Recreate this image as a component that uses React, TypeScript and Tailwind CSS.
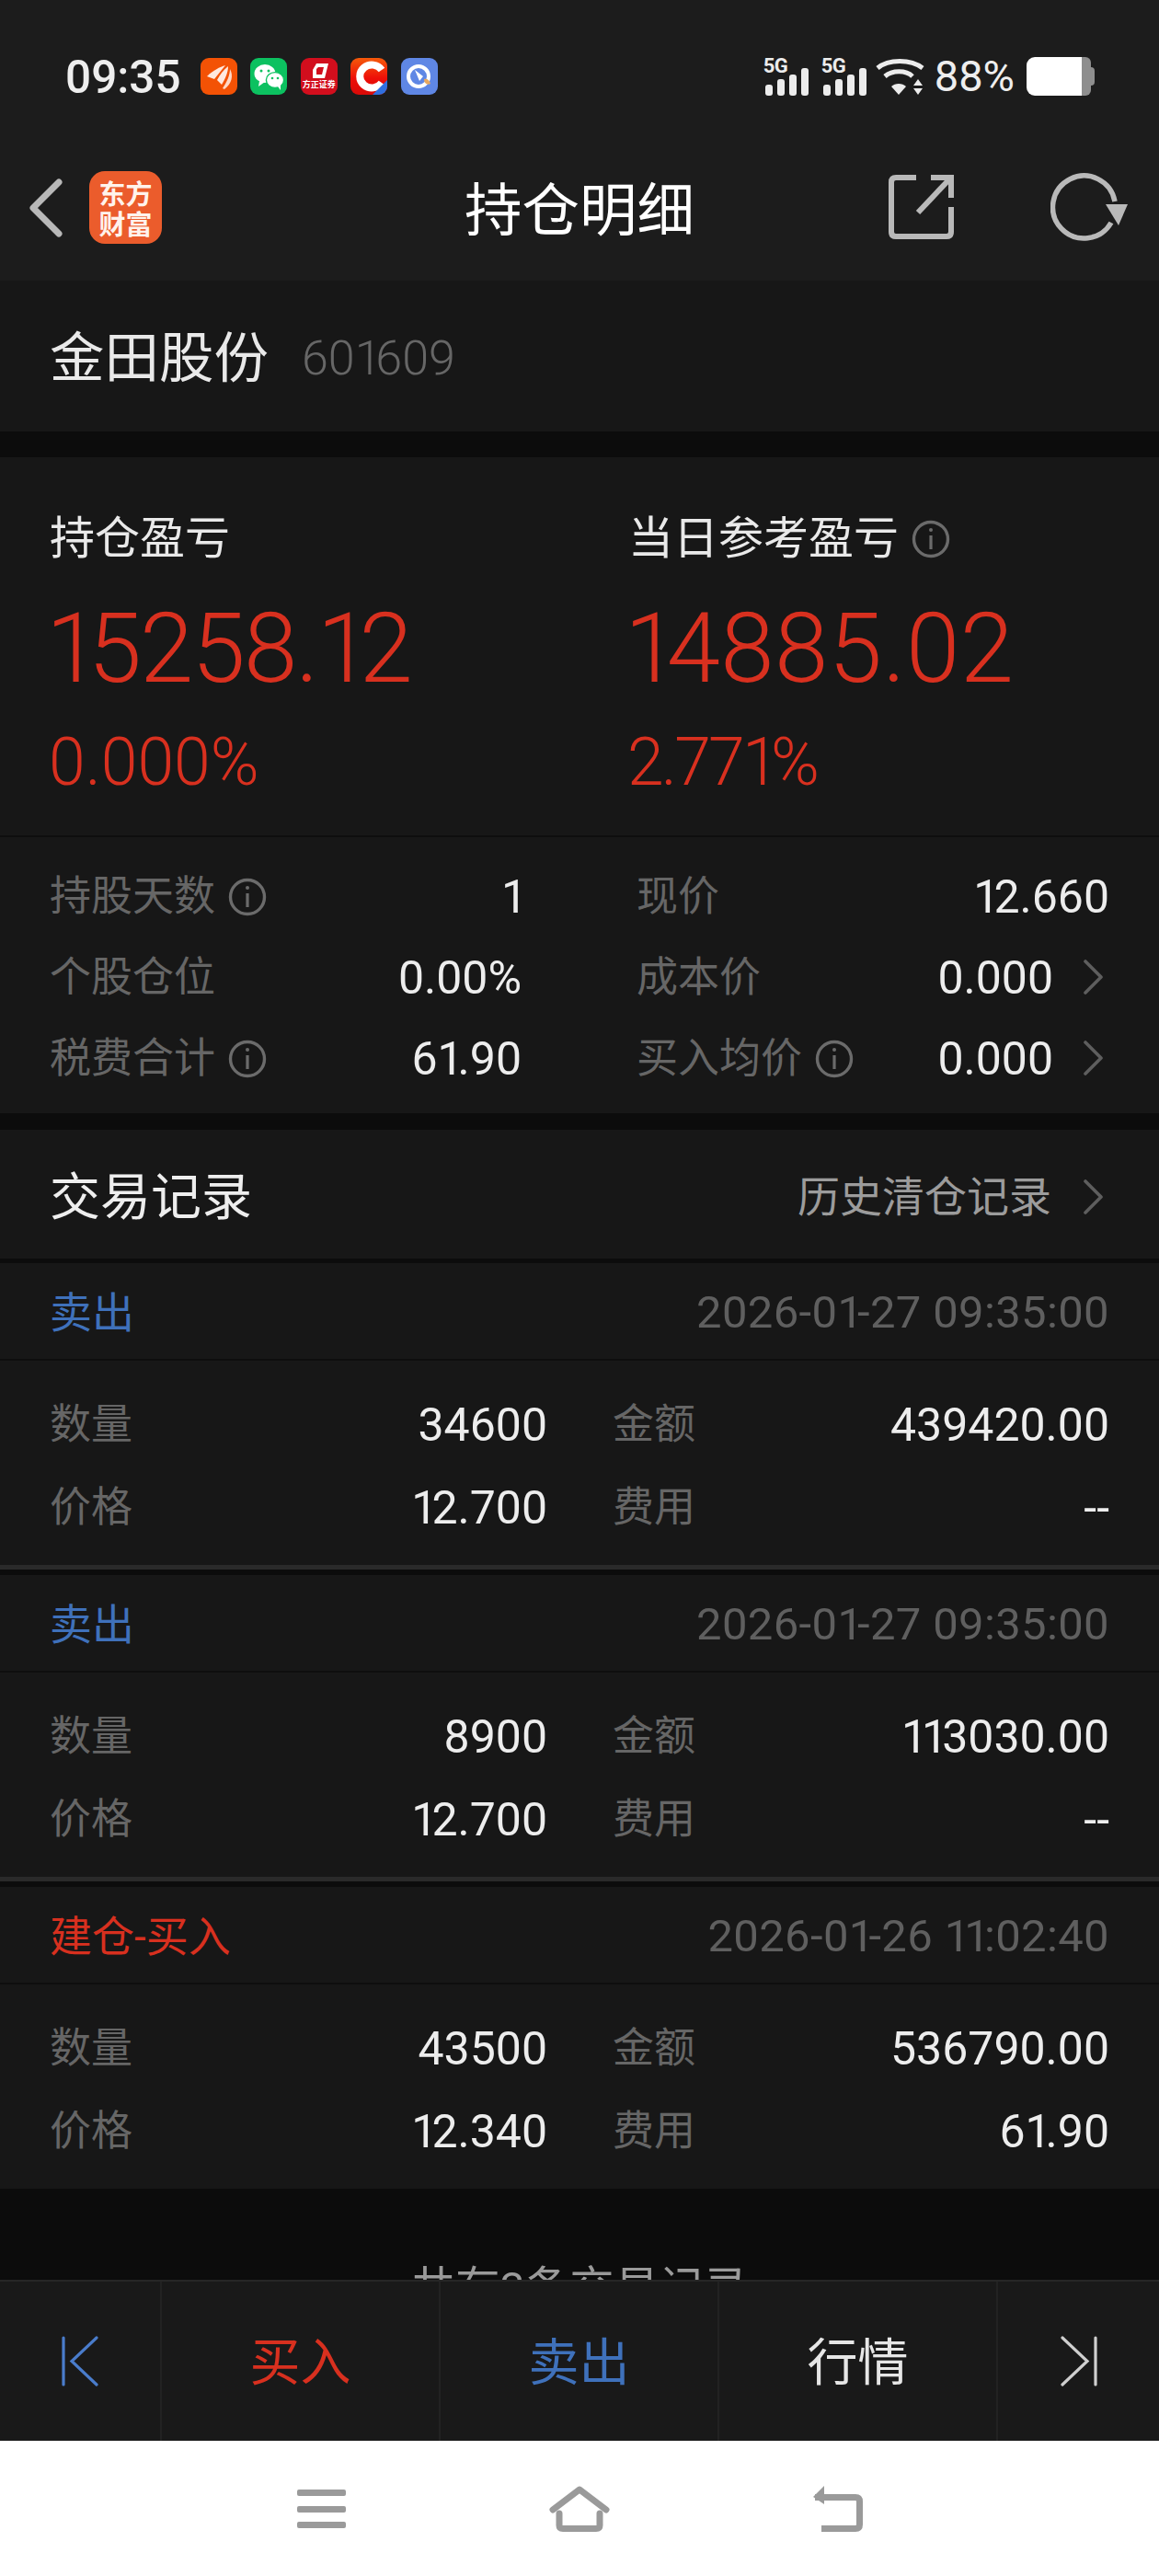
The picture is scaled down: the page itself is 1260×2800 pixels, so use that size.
import React from "react";

const FONT = "font-['Roboto','Noto_Sans_CJK_SC',sans-serif]";

function Num({ v }: { v: string }) {
  return (
    <>
      {v.split(/(1)/).filter(Boolean).map((p, i) =>
        p === "1" ? (
          <span key={i} className="tracking-[-0.12em]">1</span>
        ) : (
          <React.Fragment key={i}>{p}</React.Fragment>
        )
      )}
    </>
  );
}

function Info({ className = "" }: { className?: string }) {
  return (
    <svg viewBox="0 0 42 42" className={`w-[42px] h-[42px] shrink-0 ${className}`} fill="none" stroke="#6b6b6b" strokeWidth="3.4">
      <circle cx="21" cy="21" r="18.5" />
      <line x1="21" y1="17" x2="21" y2="32" strokeWidth="3.2" />
      <circle cx="21" cy="11" r="2" fill="#6b6b6b" stroke="none" />
    </svg>
  );
}

function Chevron({ className = "" }: { className?: string }) {
  return (
    <svg viewBox="0 0 24 38" className={`w-[24px] h-[38px] shrink-0 ${className}`} fill="none" stroke="#5e5e5e" strokeWidth="3.6" strokeLinecap="round" strokeLinejoin="round">
      <path d="M4 2 L21 19 L4 36" />
    </svg>
  );
}

function Signal() {
  return (
    <div className="relative w-[49px] h-[42px]">
      <span className="absolute left-0 top-[-3px] text-[22px] leading-[26px] font-bold text-[#ececec] font-['Roboto',sans-serif] tracking-[-0.5px]">5G</span>
      <svg viewBox="0 0 49 42" className="absolute inset-0 w-[49px] h-[42px]" fill="#ececec">
        <rect x="2" y="30" width="8" height="12" rx="3" />
        <rect x="15" y="24" width="8" height="18" rx="3" />
        <rect x="28" y="19" width="8" height="23" rx="3" />
        <rect x="41" y="12" width="8" height="30" rx="3" />
      </svg>
    </div>
  );
}

function AppIcons() {
  return (
    <div className="flex gap-[14.6px] ml-[21px] mt-[3px]">
      <svg viewBox="0 0 40 40" className="w-[40px] h-[40px]">
        <rect width="40" height="40" rx="9" fill="#f35205" />
        <path d="M7 20 C14 13 21 10 27 8 C23 13 19 18 15 23 Z" fill="#ffe9df" />
        <path d="M18 24 C21 18 25 13 30 9 C30 16 27 22 23 29 Z" fill="#ffe9df" />
        <path d="M24 33 C29 26 32 18 32 12 C36 19 34 28 26 34 Z" fill="#ffd9c6" />
      </svg>
      <svg viewBox="0 0 40 40" className="w-[40px] h-[40px]">
        <rect width="40" height="40" rx="9" fill="#0cc160" />
        <ellipse cx="16" cy="17" rx="11.5" ry="10" fill="#fff" />
        <path d="M10 25 L9 31 L16 26 Z" fill="#fff" />
        <ellipse cx="27" cy="24" rx="9.6" ry="8.4" fill="#fff" stroke="#0cc160" strokeWidth="1.4" />
        <path d="M30 31 L33 35 L33 29 Z" fill="#fff" />
        <circle cx="12" cy="14" r="1.5" fill="#0cc160" />
        <circle cx="20" cy="14" r="1.5" fill="#0cc160" />
        <circle cx="24" cy="22" r="1.3" fill="#0cc160" />
        <circle cx="30" cy="22" r="1.3" fill="#0cc160" />
      </svg>
      <div className="relative w-[40px] h-[40px] rounded-[9px] bg-[#d20e1d]">
        <svg viewBox="0 0 40 40" className="absolute inset-0 w-[40px] h-[40px]">
          <path d="M17 6 H30 L26 22 H13 V13 Z" fill="#fff" />
          <path d="M19 10 H25 L23 18 H17 V12 Z" fill="#d20e1d" />
        </svg>
        <span className="absolute left-0 right-0 top-[24px] text-center text-[9px] leading-[10px] font-bold text-white whitespace-nowrap">方正证券</span>
      </div>
      <div className="relative w-[40px] h-[40px] rounded-[9px] overflow-hidden bg-[linear-gradient(180deg,#f55a0a_0%,#ee0f08_55%,#d80a08_100%)]">
        <svg viewBox="0 0 40 40" className="absolute inset-0 w-[40px] h-[40px]">
          <path d="M34 13 A13 12.5 0 1 0 34 27" fill="none" stroke="#fff" strokeWidth="8" />
          <path d="M40 24 V40 H24 Z" fill="#2f6fe0" />
        </svg>
      </div>
      <svg viewBox="0 0 40 40" className="w-[40px] h-[40px]">
        <rect width="40" height="40" rx="9" fill="#5f87e5" />
        <circle cx="19" cy="20" r="11" fill="none" stroke="#fff" strokeWidth="4" />
        <path d="M15 13 L24 20 L20 25 Z" fill="#fff" />
        <path d="M25 23 C28 22 31 24 32 28 C28 30 25 27 25 23 Z" fill="#e8a860" />
      </svg>
    </div>
  );
}

function StatusBar() {
  return (
    <div className="h-[150px] pt-[60px] pl-[71px] pr-[70px] flex items-start">
      <div className="text-[49.5px] leading-[48px] font-medium text-[#eeeeee] font-['Roboto',sans-serif]">09:35</div>
      <AppIcons />
      <div className="ml-auto mt-[2px] flex items-start">
        <Signal />
        <div className="w-[14px]" />
        <Signal />
        <svg viewBox="0 0 54 42" className="w-[54px] h-[42px] ml-[10px]" fill="none" stroke="#ececec" strokeWidth="5">
          <path d="M2 12 C14 2 38 2 51 12" />
          <path d="M10 21 C18 14 33 14 40 21" />
          <path d="M25 41 L17 32 C21 28 29 28 33 32 Z" fill="#ececec" stroke="none" />
          <path d="M46 24 L41 31 H51 Z M46 41 L41 34 H51 Z" fill="#ececec" stroke="none" />
        </svg>
        <span className="ml-[10px] text-[47px] leading-[42px] text-[#eeeeee] font-['Roboto',sans-serif]">88%</span>
        <div className="ml-[13px] flex h-[42px] w-[74px]">
          <div className="w-[60px] bg-white rounded-l-[9px]" />
          <div className="w-[10px] bg-[#8e8e8e] rounded-r-[6px]" />
          <div className="w-[4px] my-[11px] bg-[#8e8e8e] rounded-r-[4px]" />
        </div>
      </div>
    </div>
  );
}

function NavBar() {
  return (
    <div className="h-[155px] grid grid-cols-[1fr_auto_1fr] items-start pt-[36px]">
      <div className="flex items-center pl-[31px]">
        <svg viewBox="0 0 38 64" className="w-[38px] h-[64px]" fill="none" stroke="#b8b8b8" strokeWidth="7" strokeLinecap="round" strokeLinejoin="round">
          <path d="M33 4 L5 32 L33 60" />
        </svg>
        <div className="ml-[28px] w-[79px] h-[79px] rounded-[17px] bg-[#eb5c2c] flex items-center justify-center">
          <div className="w-[58px] text-center text-[#fff3ec] text-[29px] leading-[33px] font-bold font-['Noto_Sans_CJK_SC',sans-serif]">东方财富</div>
        </div>
      </div>
      <div className="text-[62.5px] leading-[70px] text-white mt-[9px]">持仓明细</div>
      <div className="flex items-start justify-end pr-[34px]">
        <svg viewBox="0 0 72 72" className="w-[72px] h-[72px] mt-[3px]" fill="none" stroke="#b9b9b9" strokeWidth="6">
          <path d="M30 4 H8 Q3 4 3 9 V63 Q3 68 8 68 H63 Q68 68 68 63 V36" />
          <path d="M46 4 H68 V26" />
          <path d="M32 42 L66 6" />
        </svg>
        <svg viewBox="0 0 84 76" className="ml-[104px] w-[84px] h-[76px] mt-[1px]" fill="none" stroke="#b9b9b9" strokeWidth="5.5">
          <path d="M66 55 A34 34 0 1 1 70 32" />
          <path d="M60 35 H84 L74 58 Z" fill="#b9b9b9" stroke="none" />
        </svg>
      </div>
    </div>
  );
}

function Metric({ label, value, pct, info, bigCls, pctCls }: { label: string; value: string; pct: string; info?: boolean; bigCls: string; pctCls: string }) {
  return (
    <div className="flex flex-col">
      <div className="flex items-center h-[48px] text-[49px] leading-[48px] text-[#e9e9e9]">
        {label}
        {info && <Info className="ml-[14px]" />}
      </div>
      <div className={`mt-[41px] -ml-[4px] text-[105px] leading-[110px] font-light text-[#d8301f] font-['Roboto',sans-serif] ${bigCls}`}>
        <Num v={value} />
      </div>
      <div className={`mt-[33px] -ml-[1px] text-[71.5px] leading-[70px] font-light text-[#d8301f] font-['Roboto',sans-serif] ${pctCls}`}>
        <Num v={pct} />
      </div>
    </div>
  );
}

function Stat({ label, value, info, chevron }: { label: string; value: string; info?: boolean; chevron?: boolean }) {
  return (
    <div className="flex items-center h-[88px]">
      <span className="text-[45px] leading-[50px] text-[#666666]">{label}</span>
      {info && <Info className="ml-[14px]" />}
      <span className="ml-auto text-[50px] leading-[50px] text-[#ededed] font-['Roboto',sans-serif]">
        <Num v={value} />
      </span>
      {chevron && <Chevron className="ml-[31px] mr-[6px] -mt-[3px]" />}
    </div>
  );
}

function TradeRow({ label, value }: { label: string; value: string }) {
  return (
    <div className="h-[90px] flex items-center justify-between">
      <span className="text-[45px] leading-[50px] text-[#666666]">{label}</span>
      <span className="text-[50px] leading-[50px] text-[#ededed] font-['Roboto',sans-serif]">
        <Num v={value} />
      </span>
    </div>
  );
}

function Trade({ side, sideColor, time, qty, amount, price, fee, last }: { side: string; sideColor: string; time: string; qty: string; amount: string; price: string; fee: string; last?: boolean }) {
  return (
    <div>
      <div className="h-[106px] px-[54px] pt-[3px] flex items-center justify-between border-b-2 border-[#0e0e0e]">
        <span className={`text-[46px] leading-[50px] ${sideColor}`}>{side}</span>
        <span className="text-[49px] leading-[50px] text-[#5f5f5f] font-['Roboto',sans-serif] tracking-[0.35px]">
          <Num v={time} />
        </span>
      </div>
      <div className="pt-[25px] pb-[17px] px-[54px] grid grid-cols-[541px_1fr] gap-x-[71px]">
        <TradeRow label="数量" value={qty} />
        <TradeRow label="金额" value={amount} />
        <TradeRow label="价格" value={price} />
        <TradeRow label="费用" value={fee} />
      </div>
      {!last && <div className="h-[11px] border-t-[5px] border-[#2a2a2a] bg-[#0c0c0c]" />}
    </div>
  );
}

function BottomBar() {
  return (
    <div className="h-[175px] shrink-0 bg-[#191919] border-t-2 border-[#262626] flex">
      <div className="w-[176px] border-r-2 border-[#222222] flex items-center justify-center">
        <svg viewBox="0 0 40 55" className="w-[40px] h-[55px]" fill="none" stroke="#4a7ccb" strokeWidth="3.2" strokeLinecap="round">
          <path d="M2 2 V53" />
          <path d="M38 2 L11 27.5 L38 53" />
        </svg>
      </div>
      <div className="w-[303px] border-r-2 border-[#222222] flex items-center justify-center pt-[3px] text-[55px] text-[#d8301f]">买入</div>
      <div className="w-[303px] border-r-2 border-[#222222] flex items-center justify-center pt-[3px] text-[55px] text-[#3f71bb]">卖出</div>
      <div className="w-[303px] border-r-2 border-[#222222] flex items-center justify-center pt-[3px] text-[55px] text-[#e6e6e6]">行情</div>
      <div className="flex-1 flex items-center justify-center">
        <svg viewBox="0 0 40 55" className="w-[40px] h-[55px]" fill="none" stroke="#cfcfcf" strokeWidth="3.2" strokeLinecap="round">
          <path d="M38 2 V53" />
          <path d="M2 2 L29 27.5 L2 53" />
        </svg>
      </div>
    </div>
  );
}

function SystemNav() {
  return (
    <div className="h-[147px] shrink-0 bg-white flex items-center pl-[323px]">
      <svg viewBox="0 0 53 42" className="w-[53px] h-[42px]" fill="#9a9a9a">
        <rect x="0" y="0" width="53" height="7" rx="2" />
        <rect x="0" y="18" width="53" height="7" rx="2" />
        <rect x="0" y="35" width="53" height="7" rx="2" />
      </svg>
      <svg viewBox="0 0 66 50" className="ml-[221px] w-[66px] h-[50px]" fill="none" stroke="#9a9a9a" strokeWidth="7" strokeLinejoin="round" strokeLinecap="round">
        <path d="M4 26 L33 4 L62 26" />
        <path d="M11 30 V43 Q11 46.5 15 46.5 H51 Q55 46.5 55 43 V30" />
      </svg>
      <svg viewBox="0 0 55 50" className="ml-[220px] w-[55px] h-[50px]" fill="none" stroke="#9a9a9a" strokeWidth="7" strokeLinejoin="round">
        <path d="M3 12.5 H47 Q51.5 12.5 51.5 17 V42 Q51.5 46.5 47 46.5 H10" />
        <path d="M13 0 L1 12 L13 20 Z" fill="#9a9a9a" stroke="none" />
      </svg>
    </div>
  );
}

export default function App() {
  return (
    <div className={`w-[1260px] h-[2800px] bg-[#0c0c0c] flex flex-col overflow-hidden ${FONT}`}>
      <div className="bg-[#1c1c1c]">
        <StatusBar />
        <NavBar />
      </div>
      <div className="h-[164px] bg-[#171717] px-[54px] pt-[5px] flex items-center">
        <span className="text-[59.5px] leading-[64px] text-[#e9e9e9]">金田股份</span>
        <span className="ml-[36px] text-[52px] leading-[56px] font-light text-[#666666] font-['Roboto',sans-serif]">
          <Num v="601609" />
        </span>
      </div>
      <div className="h-[28px] shrink-0" />
      <div className="bg-[#171717]">
        <div className="h-[413px] pt-[65px] px-[54px] grid grid-cols-[629px_1fr] border-b-2 border-[#0e0e0e]">
          <Metric label="持仓盈亏" value="15258.12" pct="0.000%" bigCls="tracking-[-1.8px]" pctCls="" />
          <Metric label="当日参考盈亏" value="14885.02" pct="2.771%" info bigCls="tracking-[0.45px]" pctCls="tracking-[-2.8px]" />
        </div>
        <div className="px-[54px] pt-[21px] pb-[15px] grid grid-cols-[513px_1fr] gap-x-[125px]">
          <Stat label="持股天数" value="1" info />
          <Stat label="现价" value="12.660" />
          <Stat label="个股仓位" value="0.00%" />
          <Stat label="成本价" value="0.000" chevron />
          <Stat label="税费合计" value="61.90" info />
          <Stat label="买入均价" value="0.000" info chevron />
        </div>
      </div>
      <div className="h-[18px] shrink-0" />
      <div className="bg-[#171717]">
        <div className="h-[145px] px-[54px] pt-[5px] flex items-center justify-between border-b-[5px] border-[#0c0c0c]">
          <span className="text-[55px] leading-[60px] text-[#eeeeee]">交易记录</span>
          <span className="flex items-center text-[46px] leading-[50px] text-[#9c9c9c]">
            历史清仓记录
            <Chevron className="ml-[33px] mr-[6px]" />
          </span>
        </div>
        <Trade side="卖出" sideColor="text-[#3f71bb]" time="2026-01-27 09:35:00" qty="34600" amount="439420.00" price="12.700" fee="--" />
        <Trade side="卖出" sideColor="text-[#3f71bb]" time="2026-01-27 09:35:00" qty="8900" amount="113030.00" price="12.700" fee="--" />
        <Trade side="建仓-买入" sideColor="text-[#d8301f]" time="2026-01-26 11:02:40" qty="43500" amount="536790.00" price="12.340" fee="61.90" last />
      </div>
      <div className="flex-1 min-h-0 overflow-hidden pt-[84px] text-center text-[48.5px] leading-[50px] text-[#9a9a9a]">共有3条交易记录</div>
      <BottomBar />
      <SystemNav />
    </div>
  );
}
